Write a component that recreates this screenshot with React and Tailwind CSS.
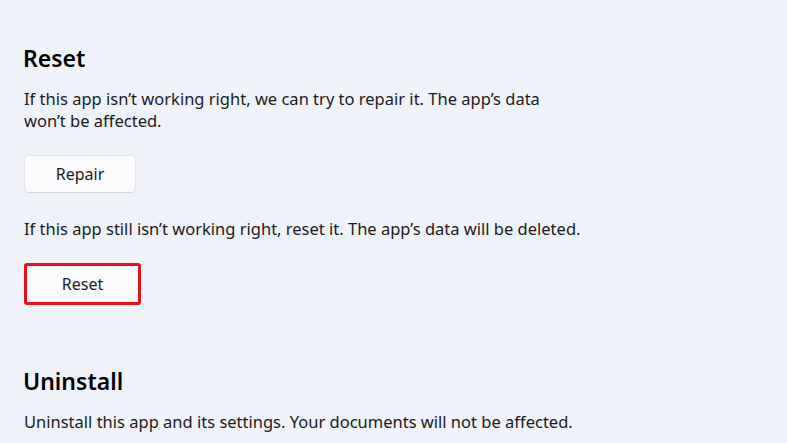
export default function App() {
  return (
    <div
      className="min-h-[443px] w-full bg-[#eff2f9] px-6 pt-[42px] text-[#1b1b1b]"
      style={{ fontFamily: '"Noto Sans", "Open Sans", sans-serif' }}
    >
      {/* Reset section */}
      <h2 className="-ml-[1px] text-[23px] font-semibold leading-8 text-black">Reset</h2>
      <p className="mt-[14px] w-[560px] text-[16.5px] leading-[22px]">
        If this app isn’t working right, we can try to repair it. The app’s data won’t be affected.
      </p>
      <button className="mt-[23px] flex h-[38px] w-[112px] items-center justify-center rounded-[5px] border border-[#e3e5ea] border-b-[#d2d4d9] bg-[#fbfbfd] text-[16px]">
        Repair
      </button>
      <p className="mt-[25px] text-[16.5px] leading-[22px]">
        If this app still isn’t working right, reset it. The app’s data will be deleted.
      </p>
      <div className="mt-[23px] w-[117px] rounded-[3px] border-[3px] border-[#e5101b]">
        <button className="flex h-[36px] w-full items-center justify-center bg-[#fbfbfd] text-[16px]">
          Reset
        </button>
      </div>

      {/* Uninstall section */}
      <h2 className="-ml-[1px] mt-[60px] text-[23px] font-semibold leading-8 text-black">Uninstall</h2>
      <p className="mt-[14px] text-[16.5px] leading-[22px]">
        Uninstall this app and its settings. Your documents will not be affected.
      </p>
    </div>
  );
}
